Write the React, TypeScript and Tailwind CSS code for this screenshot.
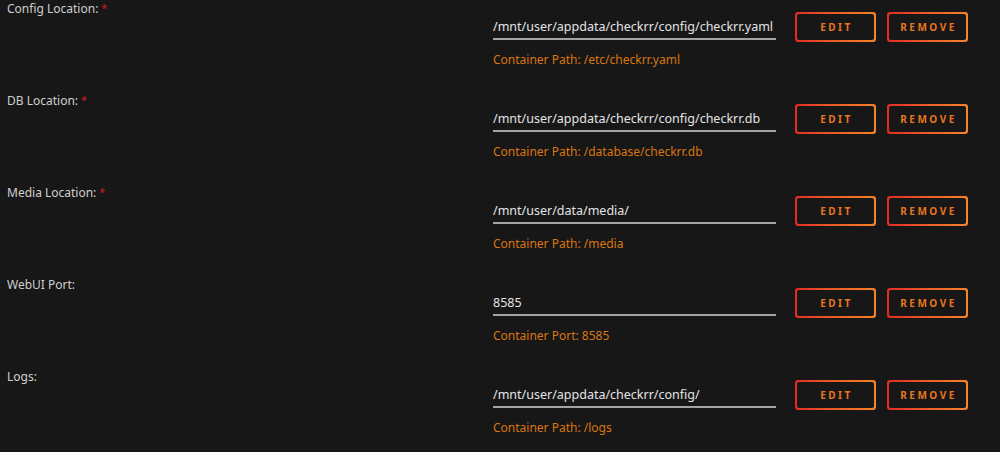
import React from 'react';

type Row = {
  label: string;
  required: boolean;
  value: string;
  hint: string;
};

const rows: Row[] = [
  { label: 'Config Location:', required: true, value: '/mnt/user/appdata/checkrr/config/checkrr.yaml', hint: 'Container Path: /etc/checkrr.yaml' },
  { label: 'DB Location:', required: true, value: '/mnt/user/appdata/checkrr/config/checkrr.db', hint: 'Container Path: /database/checkrr.db' },
  { label: 'Media Location:', required: true, value: '/mnt/user/data/media/', hint: 'Container Path: /media' },
  { label: 'WebUI Port:', required: false, value: '8585', hint: 'Container Port: 8585' },
  { label: 'Logs:', required: false, value: '/mnt/user/appdata/checkrr/config/', hint: 'Container Path: /logs' },
];

const GradientButton: React.FC<{ children: React.ReactNode }> = ({ children }) => (
  <button className="w-[81px] h-[30px] p-[2px] rounded-[3px] bg-gradient-to-r from-[#e22a23] to-[#f6832a]">
    <span className="flex h-full w-full items-center justify-center rounded-[2px] bg-[#171717] text-[10px] font-bold tracking-[2.5px] text-[#e8751f] pl-[2px]">
      {children}
    </span>
  </button>
);

export default function App() {
  return (
    <div
      className="w-[1000px] h-[452px] overflow-hidden bg-[#171717]"
      style={{ fontFamily: '"Noto Sans", "Open Sans", sans-serif' }}
    >
      {rows.map((row) => (
        <div key={row.label} className="flex h-[92px]">
          <div className="w-[493px] pl-[7px] pt-[1px] text-[12px] leading-[16px] text-[#cfcfcf]">
            {row.label}
            {row.required && <span className="ml-[3px] relative -top-[1px] text-[#d31a1a] align-top text-[11px]">*</span>}
          </div>
          <div className="w-[283px] pt-[18px]">
            <div className="h-[22px] border-b-2 border-[#a3a3a3] text-[12.5px] leading-[18px] text-[#e4e4e4]">
              {row.value}
            </div>
            <div className="mt-[12px] text-[12px] leading-[16px] text-[#d9760f]">{row.hint}</div>
          </div>
          <div className="ml-[19px] mt-[12px] flex gap-[11px] self-start">
            <GradientButton>EDIT</GradientButton>
            <GradientButton>REMOVE</GradientButton>
          </div>
        </div>
      ))}
    </div>
  );
}
